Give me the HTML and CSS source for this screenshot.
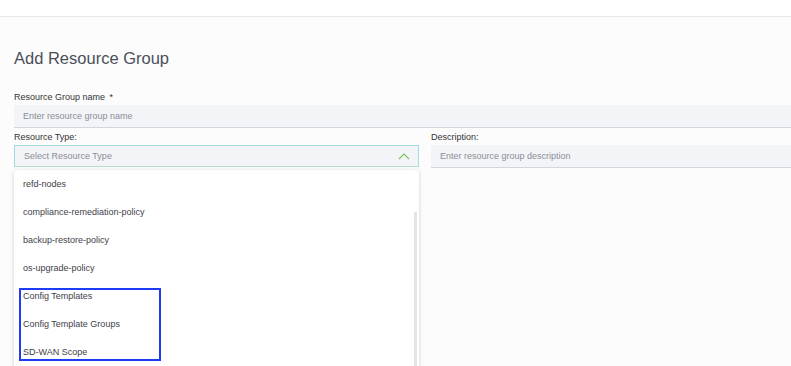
FILE: index.html
```html
<!DOCTYPE html>
<html lang="en">
<head>
    <meta charset="UTF-8">
    <title>Add Resource Group</title>
    <link rel="stylesheet" href="styles.css">
</head>
<body>
    <header class="topbar"></header>

    <main class="page">
        <h1 class="page-title">Add Resource Group</h1>

        <div class="field">
            <label class="field-label">Resource Group name <span class="req">*</span></label>
            <div class="input">Enter resource group name</div>
        </div>

        <div class="row">
            <div class="field field-type">
                <label class="field-label">Resource Type:</label>
                <div class="select">
                    <span>Select Resource Type</span>
                    <svg class="chevron" width="12" height="8" viewBox="0 0 12 8">
                        <path d="M1 7 L6 2 L11 7" fill="none" stroke="#7cc35a" stroke-width="1.1"/>
                    </svg>
                </div>
                <div class="dropdown">
                    <ul class="options">
                        <li>refd-nodes</li>
                        <li>compliance-remediation-policy</li>
                        <li>backup-restore-policy</li>
                        <li>os-upgrade-policy</li>
                        <li>Config Templates</li>
                        <li>Config Template Groups</li>
                        <li>SD-WAN Scope</li>
                    </ul>
                    <div class="highlight"></div>
                    <div class="scrollbar"></div>
                </div>
            </div>
            <div class="field field-desc">
                <label class="field-label">Description:</label>
                <div class="input">Enter resource group description</div>
            </div>
        </div>
    </main>
</body>
</html>
```

FILE: styles.css
```css
:root {
    --text-color: #3a3d44;
    --muted: #8a8e96;
    --field-bg: #f3f4f7;
    --field-line: #d3d6db;
}
body {
    font-family: 'Liberation Sans', Arial, sans-serif;
    margin: 0;
    padding: 0;
    background-color: #fcfcfd;
    color: var(--text-color);
    overflow: hidden;
    height: 366px;
}
.topbar {
    height: 16px;
    background-color: white;
    border-bottom: 1px solid #e8e9ec;
}
.page {
    padding: 0 0 0 14px;
}
.page-title {
    font-size: 16.5px;
    font-weight: normal;
    color: #4b4f58;
    margin: 0;
    padding-top: 31px;
    height: 44px;
    line-height: 20px;
}
.field-label {
    display: block;
    font-size: 9px;
    line-height: 11px;
    color: #333;
    margin-bottom: 2px;
}
.req {
    margin-left: 2px;
}
.input {
    height: 22px;
    line-height: 22px;
    background-color: var(--field-bg);
    border-bottom: 1px solid var(--field-line);
    font-size: 9px;
    color: var(--muted);
    padding-left: 9px;
}
.row {
    display: flex;
    gap: 12px;
    margin-top: 4px;
}
.field-type {
    width: 405px;
    position: relative;
}
.field-desc {
    flex: 1;
}
.select {
    height: 20px;
    border: 1px solid #a3dadf;
    border-bottom-color: #b1dfc4;
    background-color: var(--field-bg);
    display: flex;
    align-items: center;
    justify-content: space-between;
    padding: 0 8px 0 9px;
    font-size: 9px;
    color: var(--muted);
}
.dropdown {
    position: absolute;
    top: 38px;
    left: 0;
    width: 405px;
    height: 200px;
    background-color: white;
    border-radius: 4px;
    box-shadow: 0 1px 4px rgba(0,0,0,0.18);
}
.options {
    list-style: none;
    margin: 0;
    padding: 9px 0 0 9px;
    font-size: 9px;
    color: #3e4149;
}
.options li {
    height: 28px;
    line-height: 11px;
}
.highlight {
    position: absolute;
    left: 5px;
    top: 118px;
    width: 138px;
    height: 69px;
    border: 2px solid #1f3cf5;
}
.scrollbar {
    position: absolute;
    right: 2px;
    top: 42px;
    width: 3px;
    height: 160px;
    background-color: #e3e4e7;
}
```
